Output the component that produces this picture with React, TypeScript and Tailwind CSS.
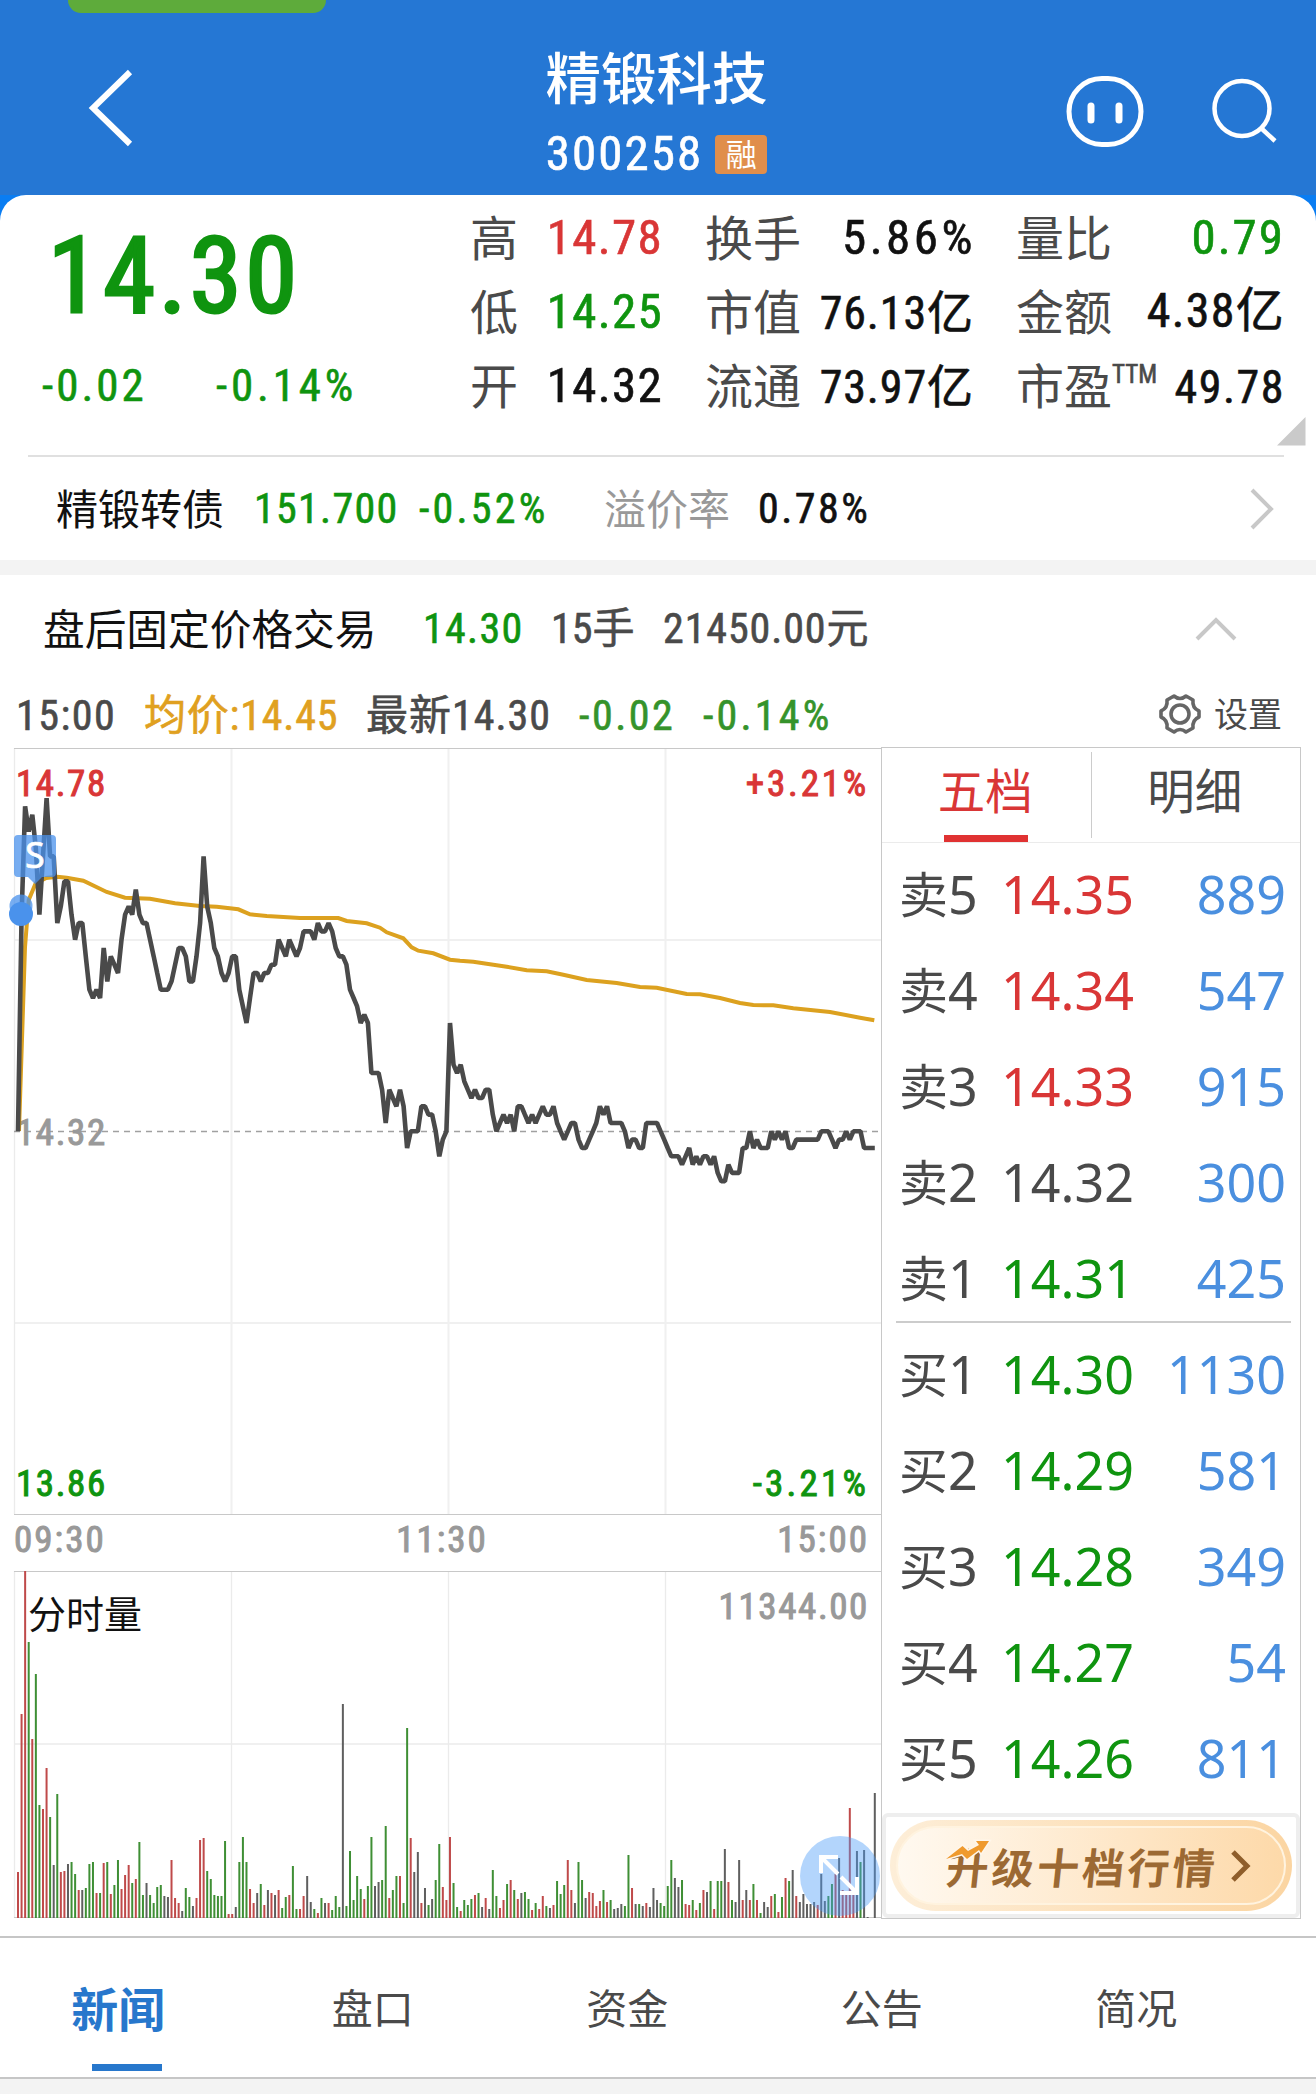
import type { ReactNode } from "react";

import { clsx } from "clsx";

const NUM = "font-['Roboto_Condensed','Noto_Sans_CJK_SC',sans-serif] [-webkit-text-stroke:0.6px_currentColor]";

const TONES = {
  up: "text-[#d93636]",
  down: "text-[#0f940f]",
  flat: "text-[#4a4a4a]",
  ink: "text-[#111]",
};

type Tone = keyof typeof TONES;

// one point per minute, in ticks of 0.01 above the previous close
const PRICE_TICKS = [
  0, 26, 39, 36, 38, 34, 26, 33, 40, 33, 33, 25, 27, 30, 30, 26, 23, 25, 25, 21, 17, 16, 17, 16, 22, 18, 21, 20, 19, 23,
  26, 27, 26, 29, 26, 25, 25, 23, 21, 19, 17, 17, 17, 18, 20, 22, 22, 21, 18, 18, 21, 25, 33, 27, 25, 22, 21, 19, 18,
  19, 21, 21, 17, 15, 13, 16, 19, 19, 18, 19, 19, 20, 20, 23, 22, 21, 23, 22, 21, 22, 24, 24, 24, 23, 25, 24, 24, 25,
  24, 22, 21, 21, 20, 17, 16, 15, 13, 14, 13, 7, 7, 7, 5, 1, 5, 4, 3, 5, 3, -2, 0, 0, 0, 3, 3, 2, 2, 0, -3, -1, 0, 13,
  8, 7, 8, 6, 5, 4, 5, 4, 4, 5, 5, 2, 0, 1, 2, 1, 2, 0, 3, 3, 2, 1, 2, 1, 2, 3, 2, 2, 3, 1, 0, -1, 0, 1, 1, -1, -2,
  -2, -1, 0, 1, 3, 2, 3, 1, 1, 1, 1, 0, -2, -1, -1, -2, -2, 1, 1, 1, 1, 0, -1, -2, -3, -3, -3, -4, -3, -2, -4, -3, -4,
  -3, -3, -4, -3, -5, -6, -6, -4, -5, -5, -5, -2, -2, 0, -2, -1, -2, -2, -2, 0, -1, 0, -1, 0, -2, -2, -1, -1, -1, -1,
  -1, -1, -1, 0, 0, 0, -1, -2, -1, -1, 0, -1, 0, 0, 0, -2, -2, -2, -2,
];

const AVERAGE_POINTS =
  "5,383 11,199 14.7,152 21.7,135.3 32.3,130 43.3,128.7 52.7,129.7 69.3,132.7 92.7,144 111,149.7 136,150.7 161,155.3 186,158 202.7,158.7 224.3,161.3 236,166.3 252.7,168 286,170 324.3,170 332.7,173 352.7,175.3 366,179.7 372.7,184.3 389.3,190.3 397.7,199.3 404.3,202.7 419.3,205.3 436,211.7 446,212.7 459.3,213.7 492.7,218.7 512.7,222.3 532.7,223.3 549.3,226.7 572.7,232 602.7,235 626,239 642.7,239.7 672.7,246 686,246.3 706,250 726,255 739.3,257 759.3,257.3 779.3,260.3 816,264 846,269.7 860.3,272.3";

// r = up minute, g = down minute, k = unchanged
const VOLUME = `
r46 r204 r347 g276 r179 g244 g113 r109 r150 g101 k53 g124 r46 r47 k54 g56 g44 r28 k28 g30 g54 g56 r25 g25 r55 g56 r24 g33 g58 r29
r43 r53 g35 r39 g76 g23 k35 g23 g15 g31 g33 k22 k21 r58 r20 r15 k7 g30 g21 k12 r20 r78 r80 g47 g39 g23 g22 g22 g77 r4
r4 k11 g56 g81 g56 r29 r15 k25 g34 r13 k28 r25 k23 r28 g10 g21 r23 g52 g9 r9 r22 k42 k16 g9 r5 g20 k15 r15 g8 g22
g11 k214 g12 g67 g18 g42 g29 r19 g32 g81 k32 k36 g38 g92 r20 g28 g42 r42 g15 g190 r80 k46 k66 r15 k30 g13 k19 g38 g74 r31
r18 r81 g35 g11 r7 g18 g13 g19 r23 g25 k11 r20 k9 g48 g22 r10 r18 g34 r38 g28 r19 k25 g26 g19 r8 g15 r9 r22 g12 k10
r13 g37 g24 g33 r58 r28 k15 g56 g38 k20 r26 r25 r12 r17 g28 r16 g18 k9 k10 k14 g12 g63 r30 k14 g14 k12 r15 k11 k30 k18
g15 g12 g32 g58 k40 k31 g38 r14 r13 g18 r8 g15 r28 k26 g37 r9 g37 g37 k69 r36 g18 k16 k58 r18 k28 r18 g34 r18 g5 k16
k11 r22 g24 r6 g21 r40 g37 k48 r22 k16 k24 k14 k14 k16 r13 k44 k17 g22 g34 r44 k60 r28 r24 r110 r24 k67 g56 k68 k1 k0
k125`
  .trim()
  .split(/\s+/);

const BAR_FILL: Record<string, string> = { r: "#bf4a4a", g: "#3f8f35", k: "#5f5f5f" };

const MINUTE = 3.57;

const STATS: { label: string; sup?: string; value: string; tone: Tone; className: string }[][] = [
  [
    { label: "高", value: "14.78", tone: "up", className: "text-[49px] tracking-[1.3px]" },
    { label: "低", value: "14.25", tone: "down", className: "text-[49px] tracking-[1.3px]" },
    { label: "开", value: "14.32", tone: "ink", className: "text-[49px] tracking-[1.3px]" },
  ],
  [
    { label: "换手", value: "5.86%", tone: "ink", className: "-mr-[2px] text-[49px] tracking-[3.5px]" },
    { label: "市值", value: "76.13亿", tone: "ink", className: "pt-[3px] text-[46px] tracking-[0.9px]" },
    { label: "流通", value: "73.97亿", tone: "ink", className: "pt-[3px] text-[46px] tracking-[0.9px]" },
  ],
  [
    { label: "量比", value: "0.79", tone: "down", className: "text-[49px] tracking-[2px]" },
    { label: "金额", value: "4.38亿", tone: "ink", className: "text-[48px] tracking-[1.3px]" },
    { label: "市盈", sup: "TTM", value: "49.78", tone: "ink", className: "pt-[3px] text-[46px] tracking-[1.5px]" },
  ],
];

const ASKS: [string, string, string, Tone][] = [
  ["卖5", "14.35", "889", "up"],
  ["卖4", "14.34", "547", "up"],
  ["卖3", "14.33", "915", "up"],
  ["卖2", "14.32", "300", "flat"],
  ["卖1", "14.31", "425", "down"],
];

const BIDS: [string, string, string, Tone][] = [
  ["买1", "14.30", "1130", "down"],
  ["买2", "14.29", "581", "down"],
  ["买3", "14.28", "349", "down"],
  ["买4", "14.27", "54", "down"],
  ["买5", "14.26", "811", "down"],
];

const TABS = ["新闻", "盘口", "资金", "公告", "简况"];

function Num({ className, children }: { className?: string; children: ReactNode }) {
  return <span className={clsx(NUM, "whitespace-nowrap", className)}>{children}</span>;
}

function Header() {
  return (
    <header className="relative flex h-[195px] justify-between bg-[#2577d4] text-white">
      <div className="absolute top-0 left-[68px] h-[13px] w-[258px] rounded-b-[28px] bg-[#5eab3b]" />
      <svg className="mt-[66px] ml-[84px] h-[84px] w-[54px]" viewBox="0 0 54 84" fill="none" stroke="currentColor" strokeWidth="6">
        <path d="M46 6 9 42l37 36" />
      </svg>
      <div className="absolute inset-x-0 top-0 flex flex-col items-center pr-[3px]">
        <h1 className="mt-[47px] text-[55.5px] leading-[56px] font-medium">精锻科技</h1>
        <div className="mt-[23px] flex items-center">
          <Num className="text-[49px] leading-[56px] tracking-[2.1px]">300258</Num>
          <span className="ml-[12px] flex h-[39px] w-[52px] items-center justify-center rounded-[4px] bg-[#e08e4b] pb-[4px] text-[31px] leading-none">
            融
          </span>
        </div>
      </div>
      <div className="mt-[70px] mr-[35px] flex gap-[65px]">
        <svg className="h-[80px] w-[80px]" viewBox="0 0 80 80" fill="none" stroke="currentColor" strokeLinecap="round">
          <rect x="4" y="8.5" width="72" height="66" rx="33" strokeWidth="5" />
          <path d="M26 36v14M54 36v14" strokeWidth="7" />
        </svg>
        <svg className="h-[80px] w-[71px]" viewBox="0 0 71 80" fill="none" stroke="currentColor" strokeWidth="4.5">
          <circle cx="32" cy="38.500" r="27.500" />
          <path d="m51 58 14 13" />
        </svg>
      </div>
    </header>
  );
}

function Quote() {
  return (
    <div className="bg-[#0a7df2]">
      <section className="h-[365px] rounded-t-[26px] bg-white pt-[5px]">
        <div className="flex h-[255px] pl-[42px]">
          <div className={clsx("w-[430px]", TONES.down)}>
            <div className="flex h-[148px] items-center">
              <span className="pt-[4px] pl-[6px] font-['Roboto_Condensed',sans-serif] text-[105px] leading-none tracking-[3.5px] [-webkit-text-stroke:3px_currentColor]">
                14.30
              </span>
            </div>
            <div className="flex h-[74px] items-center text-[45px] leading-none">
              <Num className="w-[174px] tracking-[3px]">-0.02</Num>
              <Num className="tracking-[3.800px]">-0.14%</Num>
            </div>
          </div>
          <div className="flex gap-[46px]">
            {STATS.map((column, index) => (
              <div className={index === 0 ? "w-[191px]" : "w-[265px]"} key={index}>
                {column.map((item) => (
                  <div className="flex h-[74px] items-center justify-between leading-none" key={item.label}>
                    <span
                      className={clsx(
                        "flex pb-[4px] text-[48px] whitespace-nowrap text-[#4a4a4a]",
                        index === 0 ? "-ml-[2px]" : "-ml-[4px]",
                      )}
                    >
                      {item.label}
                      {item.sup ? <Num className="text-[25px] leading-[32px]">{item.sup}</Num> : null}
                    </span>
                    <Num className={clsx(TONES[item.tone], item.className)}>{item.value}</Num>
                  </div>
                ))}
              </div>
            ))}
          </div>
        </div>
        <div className="relative mr-[32px] ml-[28px] flex h-[105px] items-center border-t-2 border-[#e0e0e0] pl-[28px] text-[42px] leading-none">
          <svg className="absolute top-[-40px] right-[-22px] h-[29px] w-[29px]" viewBox="0 0 29 29">
            <path d="M28.500 0v28.500H0z" fill="#cacaca" />
          </svg>
          <span className="w-[198px] pb-[3px] text-[#111]">精锻转债</span>
          <Num className={clsx("w-[165px] tracking-[1.3px]", TONES.down)}>151.700</Num>
          <Num className={clsx("w-[185px] tracking-[3.200px]", TONES.down)}>-0.52%</Num>
          <span className="w-[154px] pb-[3px] text-[#999]">溢价率</span>
          <Num className="tracking-[2.5px] text-[#111]">0.78%</Num>
          <svg className="mr-[9px] ml-auto h-[44px] w-[26px]" viewBox="0 0 26 44" fill="none" stroke="#c8c8c8" strokeWidth="4">
            <path d="m3 3 19 19L3 41" />
          </svg>
        </div>
      </section>
    </div>
  );
}

function AfterHours() {
  return (
    <div className="flex h-[108px] items-center pl-[43px] text-[42px] leading-none text-[#4a4a4a]">
      <span className="w-[380px] pb-[3px] text-[41.700px] text-[#111]">盘后固定价格交易</span>
      <Num className={clsx("w-[128px] tracking-[1.3px]", TONES.down)}>14.30</Num>
      <Num className="w-[112px]">15手</Num>
      <Num className="tracking-[0.9px]">21450.00元</Num>
      <svg className="mr-[78px] ml-auto h-[26px] w-[44px]" viewBox="0 0 44 26" fill="none" stroke="#c8c8c8" strokeWidth="4">
        <path d="m3 23 19-19 19 19" />
      </svg>
    </div>
  );
}

function InfoLine() {
  return (
    <div className="flex h-[65px] items-center pl-[16px] text-[42px] leading-none text-[#4a4a4a]">
      <Num className="w-[128px] tracking-[1.5px]">15:00</Num>
      <Num className="w-[222px] tracking-[0.8px] text-[#e0a020]">均价:14.45</Num>
      <Num className="w-[213px] tracking-[1px]">最新14.30</Num>
      <Num className="w-[124px] tracking-[2.5px] text-[#35932b]">-0.02</Num>
      <Num className="tracking-[3.200px] text-[#35932b]">-0.14%</Num>
      <div className="mr-[34px] ml-auto flex items-center gap-[12px] pb-[3px]">
        <svg className="h-[44px] w-[44px]" viewBox="0 0 44 44" fill="none" stroke="#666" strokeWidth="3.600" strokeLinejoin="round">
          <path d="M16 4q6 5 12 0l7 4q-1 8 6 11v6q-7 3-6 11l-7 4q-6-5-12 0l-7-4q1-8-6-11v-6q7-3 6-11z" />
          <circle cx="22" cy="22" r="9" />
        </svg>
        <span className="pb-[2px] text-[34px]">设置</span>
      </div>
    </div>
  );
}

function Charts() {
  const line = PRICE_TICKS.map((tick, i) => `${(4 + i * MINUTE).toFixed(1)},${(383.3 - tick * 8.33).toFixed(1)}`).join(" ");

  return (
    <div className="relative ml-[14px] w-[867px]">
      <svg className="block h-[1171px] w-[867px] overflow-visible" viewBox="0 0 867 1171" fontSize="37">
        <g fill="none" stroke="#f0f0f0" strokeWidth="2">
          <path d="M217.500 0v766M434.500 0v766M651.500 0v766M0 192h867M0 575h867" />
          <path d="M217.500 823v347M434.500 823v347M651.500 823v347M0 996h867M.5 0v766M.5 823v347" stroke="#ebebeb" strokeWidth="1.300" />
        </g>
        <path d="M0 .5h867M0 766.500h867M0 823.500h867M0 1169.500h867" stroke="#c8c8c8" strokeWidth="1.200" />
        <path d="M0 383.500h867" stroke="#a0a0a0" strokeWidth="1.500" strokeDasharray="6 5" />

        <g className="font-['Roboto_Condensed'] [-webkit-text-stroke:0.6px]" letterSpacing="1.600">
          <text x="2" y="397" fill="#999" stroke="#999">14.32</text>
          <text x="2" y="48" fill="#d93636" stroke="#d93636">14.78</text>
          <text x="855" y="48" fill="#d93636" stroke="#d93636" textAnchor="end" letterSpacing="2.800">+3.21%</text>
          <text x="2" y="748" fill="#0f940f" stroke="#0f940f">13.86</text>
          <text x="855" y="748" fill="#0f940f" stroke="#0f940f" textAnchor="end" letterSpacing="3.200">-3.21%</text>
          <text x="0" y="804" fill="#999" stroke="#999" letterSpacing="2">09:30</text>
          <text x="428" y="804" fill="#999" stroke="#999" textAnchor="middle" letterSpacing="2">11:30</text>
          <text x="855" y="804" fill="#999" stroke="#999" textAnchor="end" letterSpacing="2">15:00</text>
          <text x="855" y="871" fill="#999" stroke="#999" textAnchor="end">11344.00</text>
        </g>

        <polyline points={AVERAGE_POINTS} fill="none" stroke="#dca11f" strokeWidth="4" />
        <polyline points={line} fill="none" stroke="#4a4a4a" strokeWidth="4.600" strokeLinejoin="bevel" />

        <g fill="#4a92ec">
          <path d="M4 87h34a4 4 0 0 1 4 4v34a4 4 0 0 1-4 4H28l-7 7-7-7H4a4 4 0 0 1-4-4V91a4 4 0 0 1 4-4z" opacity=".75" />
          <circle cx="7" cy="158" r="11.500" opacity=".75" />
          <circle cx="7" cy="166" r="12" />
        </g>
        <text className="font-['Noto_Sans']" x="21" y="120" fill="#fff" stroke="#fff" strokeWidth=".6" fontSize="36" textAnchor="middle">S</text>

        {VOLUME.map((bar, i) => {
          const height = Number(bar.slice(1));
          return <rect fill={BAR_FILL[bar[0]]} height={height} key={i} width="2" x={3 + i * MINUTE} y={1170 - height} />;
        })}
        <text x="14" y="880" fill="#111" fontSize="38">分时量</text>
      </svg>
      <svg className="absolute right-[1px] bottom-[3px] h-[80px] w-[80px]" viewBox="0 0 80 80" fill="none" stroke="#fff" strokeWidth="4">
        <circle cx="40" cy="40" r="40" fill="#4a9bf8" fillOpacity=".42" stroke="none" />
        <path d="M38 21H21v16M21 21l17 17M40 57h17V41M57 57 41 41" />
      </svg>
    </div>
  );
}

function BookRow({ row }: { row: [string, string, string, Tone] }) {
  const [label, price, volume, tone] = row;
  return (
    <div className="flex h-[96px] items-center pr-[14px] pl-[17px] font-['Noto_Sans','Noto_Sans_CJK_SC',sans-serif] text-[52px] leading-none">
      <span className="flex w-[102px] items-center text-[#4a4a4a]">
        <span className="text-[49px]">{label[0]}</span>
        <span>{label[1]}</span>
      </span>
      <span className={TONES[tone]}>{price}</span>
      <span className="ml-auto text-[#4a8fdf]">{volume}</span>
    </div>
  );
}

function OrderBook() {
  return (
    <aside className="mt-[-1px] flex h-[1172px] w-[420px] flex-col border border-[#c8c8c8]">
      <div className="flex h-[95px] border-b border-[#ebebeb] text-[47.500px] leading-none">
        <div className="relative flex flex-1 items-center justify-center pr-[2px] pb-[12px] text-[#d93636]">
          五档
          <div className="absolute bottom-0 left-[62px] h-[7px] w-[84px] bg-[#e03232]" />
        </div>
        <div className="my-[4px] w-px bg-[#ccc]" />
        <div className="flex flex-1 items-center justify-center pr-[2px] pb-[12px] text-[#4a4a4a]">明细</div>
      </div>
      <div className="h-[478px] pt-[3px]">
        {ASKS.map((row) => (
          <BookRow key={row[0]} row={row} />
        ))}
      </div>
      <div className="mr-[9px] ml-[14px] h-[2px] bg-[#ccc]" />
      <div className="mt-[3px] h-[484px]">
        {BIDS.map((row) => (
          <BookRow key={row[0]} row={row} />
        ))}
      </div>
      <div className="mt-auto flex h-[105px] items-center justify-center rounded-[6px] border-4 border-[#eee]">
        <div className="h-[91px] w-[402px] rounded-full bg-linear-to-r from-[#fdeed8] to-[#fbd5a2] p-[6px]">
          <div className="flex h-full items-center rounded-full border-2 border-[#fff3df] bg-linear-to-r from-[#fff9f0] to-[#fdd9a9] pl-[49px]">
            <div className="relative flex items-center text-[42px] leading-none font-bold text-[#9c6933]">
              <span className="-skew-x-6 tracking-[3.200px]">升级十档行情</span>
              <svg className="absolute top-[-7px] left-[-3px] h-[24px] w-[48px]" viewBox="-2 -3 48 24">
                <path
                  d="m0 18 16.500-13 5.500 5 11-6-3-4h13l-8 12-2-3-12 9-5-5z"
                  fill="#ef9a2e"
                  paintOrder="stroke"
                  stroke="#fff6ea"
                  strokeWidth="3"
                />
              </svg>
            </div>
            <svg className="ml-[12px] h-[34px] w-[22px]" viewBox="0 0 22 34" fill="none" stroke="#8f5e2b" strokeWidth="5">
              <path d="m3 3 14 14L3 31" />
            </svg>
          </div>
        </div>
      </div>
    </aside>
  );
}

function BottomTabs() {
  return (
    <nav className="mt-[17px] flex h-[143px] border-y-2 border-[#c6c6c6]">
      {TABS.map((tab, index) => (
        <div
          className={clsx(
            "relative flex w-[254.500px] items-center justify-center pb-[3px] leading-none",
            index === 0 ? "-ml-[9px] text-[47px] font-bold text-[#2777cc]" : "text-[41px] text-[#4a4a4a]",
          )}
          key={tab}
        >
          {tab}
          {index === 0 ? <div className="absolute bottom-[6px] left-[101px] h-[7px] w-[70px] bg-[#2777cc]" /> : null}
        </div>
      ))}
    </nav>
  );
}

export default function App() {
  return (
    <main className="flex h-[2094px] w-[1316px] flex-col overflow-hidden bg-white font-['Noto_Sans_CJK_SC',sans-serif]">
      <Header />
      <Quote />
      <div className="h-[15px] shrink-0 bg-[#f3f3f3]" />
      <AfterHours />
      <InfoLine />
      <div className="flex h-[1171px]">
        <Charts />
        <OrderBook />
      </div>
      <BottomTabs />
      <div className="flex-1 bg-[#f3f3f3]" />
    </main>
  );
}
